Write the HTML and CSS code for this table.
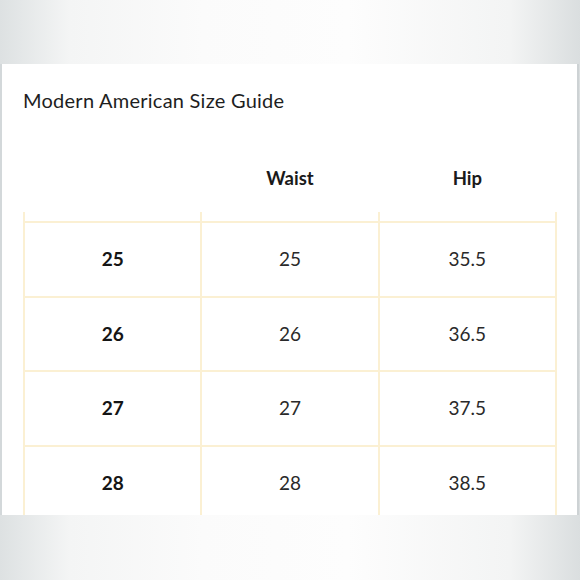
FILE: index.html
```html
<!DOCTYPE html>
<html>
<head>
<meta charset="utf-8">
<link rel="stylesheet" href="styles.css">
</head>
<body>
<div class="page">
  <div class="panel">
    <h1 class="title">Modern American Size Guide</h1>
    <table class="sizes">
      <thead>
        <tr class="head">
          <th></th>
          <th>Waist</th>
          <th>Hip</th>
        </tr>
        <tr class="stub">
          <td></td><td></td><td></td>
        </tr>
      </thead>
      <tbody>
        <tr><th>25</th><td>25</td><td>35.5</td></tr>
        <tr><th>26</th><td>26</td><td>36.5</td></tr>
        <tr><th>27</th><td>27</td><td>37.5</td></tr>
        <tr><th>28</th><td>28</td><td>38.5</td></tr>
      </tbody>
    </table>
  </div>
</div>
</body>
</html>
```

FILE: styles.css
```css
html, body {
  margin: 0;
  padding: 0;
}
body {
  width: 580px;
  height: 580px;
  overflow: hidden;
  background:
    linear-gradient(90deg, #dde1e2 0%, #f4f5f5 12%, #fbfbfb 35%, #fdfdfd 60%, #f3f4f4 88%, #dadedf 100%);
  font-family: Lato, "Open Sans", sans-serif;
  color: #1c1c1c;
}
.page {
  padding-top: 64px;
}
.panel {
  height: 451px;
  margin: 0 1px 0 0;
  background: #ffffff;
  border-left: 2px solid #d3d8da;
  border-right: 2px solid #cdd2d4;
  overflow: hidden;
  box-sizing: border-box;
}
.title {
  margin: 0;
  padding: 24px 0 0 21px;
  font-size: 20px;
  line-height: 24px;
  font-weight: 400;
  color: #1e1e1e;
  letter-spacing: 0.25px;
}
.sizes {
  margin: 55px 0 0 21px;
  width: 534px;
  border-collapse: collapse;
  table-layout: fixed;
  font-size: 19px;
}
.sizes th,
.sizes td {
  text-align: center;
  padding: 0;
}
.head th {
  height: 45px;
  line-height: 22px;
  vertical-align: top;
  font-weight: 700;
  font-size: 18.5px;
  color: #1a1a1a;
}
.stub td {
  height: 9px;
  border-left: 2px solid #fbf0d3;
  border-right: 2px solid #fbf0d3;
}
tbody th,
tbody td {
  height: 72.6px;
  border: 2px solid #fbf0d3;
  line-height: 22px;
}
tbody th {
  font-weight: 700;
  color: #151515;
}
tbody td {
  font-weight: 400;
  color: #2a2a2a;
}
```
